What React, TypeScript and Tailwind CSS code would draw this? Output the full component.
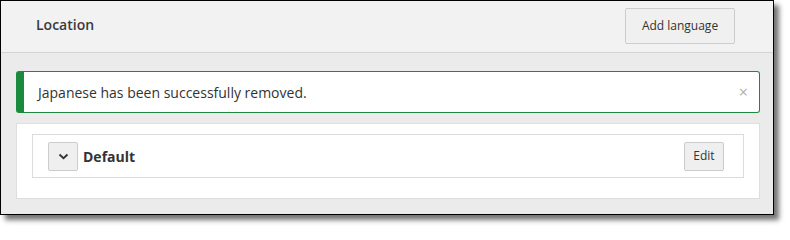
import React from 'react';

export default function App() {
  return (
    <div className="w-[790px] h-[230px] bg-white font-['Open_Sans',sans-serif] text-[#333]">
      <div className="w-[774px] h-[215px] border border-black bg-[#ebebeb] shadow-[5px_5px_5px_rgba(0,0,0,0.55)] flex flex-col">
        {/* Header */}
        <div className="h-[52px] bg-[#f2f2f2] border-b border-[#d4d4d4] flex items-start justify-between pl-[35px] pr-[38px]">
          <div className="text-[14px] leading-[20px] mt-[14px] font-semibold text-[#3a3a3a]">Location</div>
          <button className="mt-[7px] w-[110px] h-[36px] bg-[#f0f0f0] border border-[#cdcdcd] rounded-[2px] text-[12px] text-[#333]">
            Add language
          </button>
        </div>

        {/* Body */}
        <div className="pl-[15px] pt-[18px]">
          <div className="w-[744px] h-[42px] bg-white border border-[#1b8a3e] border-l-[8px] rounded-[3px] flex items-center justify-between pl-[14px] pr-[11px]">
            <span className="text-[14px]">Japanese has been successfully removed.</span>
            <span className="text-[16px] leading-none text-[#b0b0b0]">×</span>
          </div>

          <div className="mt-[10px] w-[744px] h-[76px] bg-white border border-[#dedede] pt-[10px] px-[15px]">
            <div className="h-[44px] border border-[#dcdcdc] flex items-center justify-between pl-[15px] pr-[19px]">
              <div className="flex items-center gap-[5px]">
                <button className="w-[30px] h-[29px] bg-[#efefef] border border-[#cccccc] rounded-[2px] flex items-center justify-center">
                  <svg width="11" height="7" viewBox="0 0 11 7">
                    <path d="M1.5 1.5 L5.5 5.2 L9.5 1.5" fill="none" stroke="#333" strokeWidth="1.8" />
                  </svg>
                </button>
                <span className="text-[14px] font-bold text-[#333]">Default</span>
              </div>
              <button className="w-[40px] h-[29px] bg-[#efefef] border border-[#cccccc] rounded-[2px] text-[12px] text-[#333]">
                Edit
              </button>
            </div>
          </div>
        </div>
      </div>
    </div>
  );
}
